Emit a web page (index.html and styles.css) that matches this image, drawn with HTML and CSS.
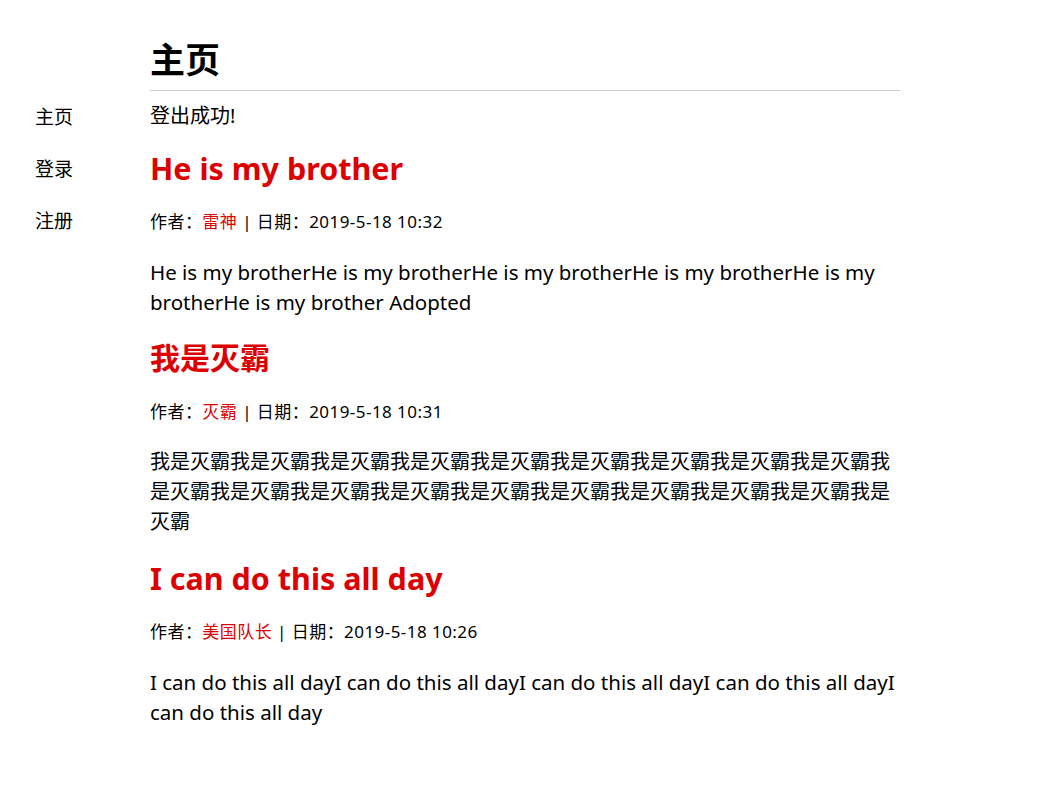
FILE: index.html
```html
<!DOCTYPE html>
<html lang="zh-CN">
<head>
<meta charset="utf-8">
<title>主页</title>
<link rel="stylesheet" href="styles.css">
</head>
<body>
<div class="page">
  <nav class="sidebar">
    <a class="nav-link" href="#">主页</a>
    <a class="nav-link" href="#">登录</a>
    <a class="nav-link" href="#">注册</a>
  </nav>
  <main class="main">
    <h1 class="page-title">主页</h1>
    <p class="flash">登出成功!</p>
    <article class="post">
      <h2 class="post-title post-title--latin">He is my brother</h2>
      <p class="post-meta">作者：<a class="author" href="#">雷神</a> | 日期：2019-5-18 10:32</p>
      <p class="post-body post-body--latin">He is my brotherHe is my brotherHe is my brotherHe is my brotherHe is my brotherHe is my brother Adopted</p>
    </article>
    <article class="post">
      <h2 class="post-title">我是灭霸</h2>
      <p class="post-meta">作者：<a class="author" href="#">灭霸</a> | 日期：2019-5-18 10:31</p>
      <p class="post-body">我是灭霸我是灭霸我是灭霸我是灭霸我是灭霸我是灭霸我是灭霸我是灭霸我是灭霸我是灭霸我是灭霸我是灭霸我是灭霸我是灭霸我是灭霸我是灭霸我是灭霸我是灭霸我是灭霸</p>
    </article>
    <article class="post">
      <h2 class="post-title post-title--latin">I can do this all day</h2>
      <p class="post-meta">作者：<a class="author" href="#">美国队长</a> | 日期：2019-5-18 10:26</p>
      <p class="post-body post-body--latin">I can do this all dayI can do this all dayI can do this all dayI can do this all dayI can do this all day</p>
    </article>
  </main>
</div>
</body>
</html>
```

FILE: styles.css
```css
html, body {
  margin: 0;
  padding: 0;
  background: #fff;
}
body {
  font-family: "Noto Sans", "Noto Sans CJK SC", sans-serif;
  color: #000;
}
.page {
  display: flex;
  align-items: flex-start;
}
.sidebar {
  width: 115px;
  padding: 102px 0 0 35px;
  display: flex;
  flex-direction: column;
  gap: 22px;
}
.nav-link {
  font-size: 19px;
  line-height: 30px;
  color: #000;
  text-decoration: none;
}
.main {
  width: 750px;
}
.page-title {
  margin: 36px 0 0;
  padding-bottom: 6px;
  border-bottom: 1px solid #ccc;
  font-size: 35px;
  line-height: 48px;
  font-weight: bold;
}
.flash {
  margin: 10px 0 15px;
  font-size: 20px;
  line-height: 30px;
}
.post {
  margin-bottom: 19px;
}
.post-title {
  margin: 0;
  font-size: 30px;
  line-height: 44px;
  font-weight: bold;
  color: #dd0000;
}
.post-title--latin {
  font-size: 30.5px;
}
.post-meta {
  margin: 19px 0 0;
  font-size: 17px;
  line-height: 26px;
  letter-spacing: 0.45px;
}
.author {
  color: #dd0000;
  text-decoration: none;
}
.post-body {
  margin: 22px 0 0;
  font-size: 20px;
  line-height: 30px;
}
.post-body--latin {
  font-size: 20.5px;
}
```
